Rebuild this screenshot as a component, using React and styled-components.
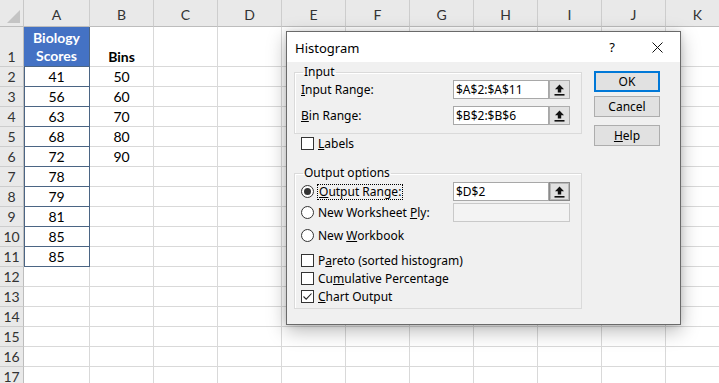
import React from 'react';
import styled, { createGlobalStyle } from 'styled-components';

const GlobalStyle = createGlobalStyle`
  html, body {
    margin: 0;
    padding: 0;
    background: #ffffff;
    overflow: hidden;
  }
`;

const COLUMNS = ['A', 'B', 'C', 'D', 'E', 'F', 'G', 'H', 'I', 'J', 'K'];
const SCORES = [41, 56, 63, 68, 72, 78, 79, 81, 85, 85];
const BINS = [50, 60, 70, 80, 90];
const ROW_COUNT = 17;

const UI_FONT = `"Noto Sans", "Open Sans", sans-serif`;

const App = () => {
  const rows = [];
  for (let r = 1; r <= ROW_COUNT; r++) {
    rows.push(
      <React.Fragment key={r}>
        <RowHeader>{r}</RowHeader>
        {COLUMNS.map((col) => {
          if (col === 'A' && r === 1) {
            return (
              <HeadCell key={col}>
                <span>Biology</span>
                <span>Scores</span>
              </HeadCell>
            );
          }
          if (col === 'A' && r >= 2 && r <= 11) {
            return <Cell key={col} $outlined>{SCORES[r - 2]}</Cell>;
          }
          if (col === 'B' && r === 1) {
            return <Cell key={col} $bold>Bins</Cell>;
          }
          if (col === 'B' && r >= 2 && r <= 6) {
            return <Cell key={col}>{BINS[r - 2]}</Cell>;
          }
          return <Cell key={col} />;
        })}
      </React.Fragment>
    );
  }

  return (
    <Page>
      <GlobalStyle />
      <Sheet>
        <Corner>
          <CornerTriangle />
        </Corner>
        {COLUMNS.map((c) => (
          <ColHeader key={c}>{c}</ColHeader>
        ))}
        {rows}
      </Sheet>

      <Dialog>
        <TitleBar>
          <Title>Histogram</Title>
          <TitleButtons>
            <HelpMark>?</HelpMark>
            <CloseIcon viewBox="0 0 11 11">
              <path d="M0.5 0.5 L10.5 10.5 M10.5 0.5 L0.5 10.5" stroke="#111" strokeWidth="1" fill="none" />
            </CloseIcon>
          </TitleButtons>
        </TitleBar>

        <Body>
          <LeftColumn>
            <Group>
              <Legend>Input</Legend>
              <GroupRows>
                <RangeRow>
                  <Label><u>I</u>nput Range:</Label>
                  <TextBox>$A$2:$A$11</TextBox>
                  <RefButton><UpArrow /></RefButton>
                </RangeRow>
                <RangeRow>
                  <Label><u>B</u>in Range:</Label>
                  <TextBox>$B$2:$B$6</TextBox>
                  <RefButton><UpArrow /></RefButton>
                </RangeRow>
              </GroupRows>
            </Group>

            <CheckRow $indent={7}>
              <CheckBox />
              <Label><u>L</u>abels</Label>
            </CheckRow>

            <Group $top={15} $bottom={3}>
              <Legend>Output options</Legend>
              <OutputRows>
                <RangeRow $top={3}>
                  <OptionLine>
                    <Radio $checked />
                    <FocusLabel><u>O</u>utput Range:</FocusLabel>
                  </OptionLine>
                  <TextBox>$D$2</TextBox>
                  <RefButton $focused><UpArrow /></RefButton>
                </RangeRow>
                <RangeRow $top={2}>
                  <OptionLine>
                    <Radio />
                    <Label>New Worksheet <u>P</u>ly:</Label>
                  </OptionLine>
                  <TextBox $disabled />
                </RangeRow>
                <RangeRow $top={4}>
                  <OptionLine>
                    <Radio />
                    <Label>New <u>W</u>orkbook</Label>
                  </OptionLine>
                </RangeRow>
                <CheckRow $top={6} $indent={1}>
                  <CheckBox />
                  <Label>P<u>a</u>reto (sorted histogram)</Label>
                </CheckRow>
                <CheckRow $indent={1}>
                  <CheckBox />
                  <Label>Cu<u>m</u>ulative Percentage</Label>
                </CheckRow>
                <CheckRow $indent={1}>
                  <CheckBox>
                    <svg width="11" height="11" viewBox="0 0 11 11">
                      <polyline points="1.5,5.5 4.2,8.2 9.5,2.5" fill="none" stroke="#222" strokeWidth="1.1" />
                    </svg>
                  </CheckBox>
                  <Label><u>C</u>hart Output</Label>
                </CheckRow>
              </OutputRows>
            </Group>
          </LeftColumn>

          <ButtonColumn>
            <DialogButton $primary>OK</DialogButton>
            <DialogButton $top={4}>Cancel</DialogButton>
            <DialogButton $top={8}><u>H</u>elp</DialogButton>
          </ButtonColumn>
        </Body>
      </Dialog>
    </Page>
  );
};

const UpArrow = () => (
  <svg width="11" height="12" viewBox="0 0 11 12">
    <path d="M5.5 0.5 L1 5.2 H3.8 V8.6 H7.2 V5.2 H10 Z" fill="#111" />
    <rect x="0.5" y="10" width="10" height="1.6" fill="#111" />
  </svg>
);

/* ---------- sheet ---------- */

const Page = styled.div`
  position: relative;
  width: 719px;
  height: 383px;
  overflow: hidden;
  background: #ffffff;
`;

const Sheet = styled.div`
  display: grid;
  grid-template-columns: 24px 66px repeat(10, 64px);
  grid-template-rows: 27px 40px repeat(16, 20px);
  font-family: "Lato", "Liberation Sans", sans-serif;
  font-size: 14px;
  color: #000;
`;

const Corner = styled.div`
  position: relative;
  background: #e9e9e9;
  border-right: 1px solid #c8c8c8;
  border-bottom: 1px solid #bdbdbd;
  box-sizing: border-box;
`;

const CornerTriangle = styled.div`
  position: absolute;
  right: 3px;
  bottom: 3px;
  width: 0;
  height: 0;
  border-left: 13px solid transparent;
  border-bottom: 13px solid #c4c4c4;
`;

const ColHeader = styled.div`
  display: flex;
  align-items: center;
  justify-content: center;
  padding-top: 2px;
  background: #e9e9e9;
  color: #333;
  border-right: 1px solid #cdcdcd;
  border-bottom: 1px solid #bdbdbd;
  box-sizing: border-box;
`;

const RowHeader = styled.div`
  display: flex;
  align-items: flex-end;
  justify-content: center;
  line-height: 18px;
  background: #e9e9e9;
  color: #333;
  border-right: 1px solid #bdbdbd;
  border-bottom: 1px solid #cdcdcd;
  box-sizing: border-box;
`;

const Cell = styled.div`
  display: flex;
  align-items: flex-end;
  justify-content: center;
  line-height: 18px;
  font-weight: ${(p) => (p.$bold ? 700 : 400)};
  border-right: 1px solid ${(p) => (p.$outlined ? '#4b6584' : '#d9d9d9')};
  border-bottom: 1px solid ${(p) => (p.$outlined ? '#4b6584' : '#d9d9d9')};
  box-shadow: ${(p) => (p.$outlined ? 'inset 1px 0 0 #4b6584' : 'none')};
  box-sizing: border-box;
`;

const HeadCell = styled.div`
  display: flex;
  flex-direction: column;
  align-items: center;
  justify-content: flex-end;
  line-height: 18px;
  padding-bottom: 1px;
  background: #4472c4;
  color: #ffffff;
  font-weight: 700;
  border-right: 1px solid #4b6584;
  border-bottom: 1px solid #4b6584;
  box-sizing: border-box;
`;

/* ---------- dialog ---------- */

const Dialog = styled.div`
  position: absolute;
  left: 286px;
  top: 31px;
  width: 395px;
  height: 294px;
  box-sizing: border-box;
  display: flex;
  flex-direction: column;
  background: #f0f0f0;
  border: 1px solid #6a6a6a;
  box-shadow: 0 6px 18px rgba(0, 0, 0, 0.28), 0 0 6px rgba(0, 0, 0, 0.12);
  font-family: ${UI_FONT};
  font-size: 12px;
  color: #000;
`;

const TitleBar = styled.div`
  display: flex;
  align-items: center;
  height: 30px;
  padding-left: 8px;
  background: #ffffff;
  flex-shrink: 0;
`;

const Title = styled.div`
  font-size: 13px;
  padding-top: 1px;
`;

const TitleButtons = styled.div`
  display: flex;
  align-items: center;
  margin-left: auto;
  margin-right: 17px;
  gap: 37px;
`;

const HelpMark = styled.span`
  font-size: 13px;
  line-height: 1;
`;

const CloseIcon = styled.svg`
  width: 11px;
  height: 11px;
`;

const Body = styled.div`
  display: flex;
  gap: 12px;
  padding: 4px 0 0 7px;
`;

const LeftColumn = styled.div`
  display: flex;
  flex-direction: column;
  width: 288px;
`;

const Group = styled.fieldset`
  margin: ${(p) => p.$top || 0}px 0 0 0;
  padding: 0 10px ${(p) => (p.$bottom != null ? p.$bottom : 8)}px 5px;
  border: 1px solid #dadada;
  box-shadow: inset 1px 1px 0 #ffffff;
  min-width: 0;
`;

const Legend = styled.legend`
  margin-left: 3px;
  padding: 0 1px;
  line-height: 12px;
  font-size: 12px;
`;

const GroupRows = styled.div`
  display: flex;
  flex-direction: column;
  gap: 7px;
  padding-top: 2px;
`;

const OutputRows = styled.div`
  display: flex;
  flex-direction: column;
`;

const RangeRow = styled.div`
  display: grid;
  grid-template-columns: 152px 96px 21px;
  align-items: center;
  height: 19px;
  padding-left: 1px;
  margin-top: ${(p) => p.$top || 0}px;
`;

const Label = styled.span`
  white-space: nowrap;
  line-height: 15px;
`;

const FocusLabel = styled.span`
  white-space: nowrap;
  line-height: 14px;
  outline: 1px dotted #000;
  outline-offset: 0;
  padding: 0 1px;
`;

const OptionLine = styled.div`
  display: flex;
  align-items: center;
  gap: 4px;
`;

const TextBox = styled.div`
  box-sizing: border-box;
  height: 19px;
  padding-left: 2px;
  line-height: 17px;
  background: ${(p) => (p.$disabled ? '#f3f3f3' : '#ffffff')};
  border: 1px solid ${(p) => (p.$disabled ? '#c9c9c9' : '#a8a8a8')};
  font-size: 12px;
  ${(p) => p.$disabled && 'grid-column: 2 / 4;'}
`;

const RefButton = styled.div`
  box-sizing: border-box;
  height: 19px;
  display: flex;
  align-items: center;
  justify-content: center;
  background: #e1e1e1;
  border: 1px solid ${(p) => (p.$focused ? '#8a8a8a' : '#adadad')};
  box-shadow: ${(p) => (p.$focused ? 'inset 0 0 0 1px #b8b8b8' : 'none')};
`;

const CheckRow = styled.div`
  display: flex;
  align-items: center;
  gap: 4px;
  height: 18px;
  padding-left: ${(p) => p.$indent || 0}px;
  margin-top: ${(p) => p.$top || 0}px;
`;

const CheckBox = styled.span`
  box-sizing: border-box;
  width: 13px;
  height: 13px;
  display: inline-flex;
  align-items: center;
  justify-content: center;
  background: #ffffff;
  border: 1px solid #333333;
  flex-shrink: 0;
`;

const Radio = styled.span`
  box-sizing: border-box;
  width: 13px;
  height: 13px;
  border-radius: 50%;
  border: 1px solid #333333;
  background: #ffffff;
  display: inline-flex;
  align-items: center;
  justify-content: center;
  flex-shrink: 0;

  &::after {
    content: '';
    width: 7px;
    height: 7px;
    border-radius: 50%;
    background: #333333;
    display: ${(p) => (p.$checked ? 'block' : 'none')};
  }
`;

const ButtonColumn = styled.div`
  display: flex;
  flex-direction: column;
  padding-top: 5px;
`;

const DialogButton = styled.div`
  box-sizing: border-box;
  width: 66px;
  height: 21px;
  margin-top: ${(p) => p.$top || 0}px;
  display: flex;
  align-items: center;
  justify-content: center;
  background: #e1e1e1;
  border: 1px solid ${(p) => (p.$primary ? '#0078d7' : '#adadad')};
  box-shadow: ${(p) => (p.$primary ? 'inset 0 0 0 1px #0078d7' : 'none')};
  font-size: 12px;
`;

export default App;
